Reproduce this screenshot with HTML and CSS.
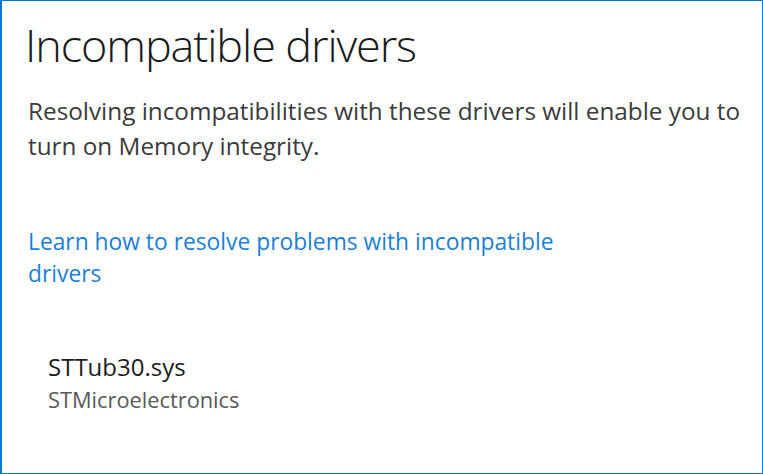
FILE: index.html
```html
<!DOCTYPE html>
<html lang="en">
<head>
    <meta charset="UTF-8">
    <meta name="viewport" content="width=device-width, initial-scale=1.0">
    <title>Incompatible drivers</title>
    <link rel="stylesheet" href="styles.css">
</head>
<body>
    <div class="panel">
        <h1 class="title">Incompatible drivers</h1>
        <p class="desc">Resolving incompatibilities with these drivers will enable you to turn on Memory integrity.</p>

        <a class="help-link" href="#">Learn how to resolve problems with incompatible drivers</a>

        <div class="driver">
            <div class="driver-name">STTub30.sys</div>
            <div class="driver-vendor">STMicroelectronics</div>
        </div>
    </div>
</body>
</html>
```
FILE: styles.css
```css
html, body {
    margin: 0;
    padding: 0;
    background: #fff;
}
body {
    font-family: "Open Sans", "Noto Sans", sans-serif;
    color: #1b1b1b;
}
.panel {
    box-sizing: border-box;
    width: 763px;
    height: 474px;
    border: 1px solid #0078d7;
    border-left-width: 2px;
    padding: 18px 20px 0 26px;
    display: flex;
    flex-direction: column;
    align-items: flex-start;
}
.title {
    margin: 0 0 0 -3px;
    font-size: 45px;
    font-weight: 300;
    line-height: 52px;
    letter-spacing: -1.1px;
    color: #1b1b1b;
}
.desc {
    margin: 22px 0 0 0;
    font-size: 24.3px;
    line-height: 35px;
    color: #3b3b3b;
}
.help-link {
    display: block;
    max-width: 560px;
    margin-top: 63px;
    font-size: 22.8px;
    line-height: 32px;
    color: #1b7fd6;
    text-decoration: none;
}
.driver {
    margin-top: 61px;
    padding-left: 20px;
}
.driver-name {
    font-size: 24px;
    line-height: 32px;
    color: #1b1b1b;
}
.driver-vendor {
    margin-top: 3px;
    font-size: 21.8px;
    line-height: 28px;
    color: #595959;
}
```
